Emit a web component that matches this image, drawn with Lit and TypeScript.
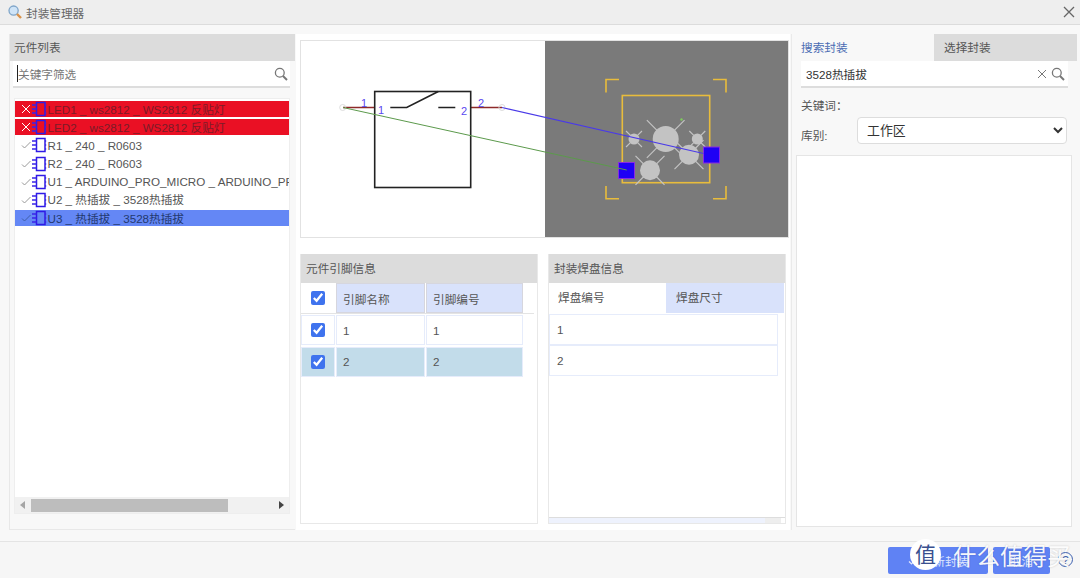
import { html, css, svg, LitElement } from 'lit';
import { customElement } from 'lit/decorators.js';
import { classMap } from 'lit/directives/class-map.js';

const PARTS = [
  { label: 'LED1 _ ws2812 _ WS2812 反贴灯', state: 'error' },
  { label: 'LED2 _ ws2812 _ WS2812 反贴灯', state: 'error' },
  { label: 'R1 _ 240 _ R0603', state: 'ok' },
  { label: 'R2 _ 240 _ R0603', state: 'ok' },
  { label: 'U1 _ ARDUINO_PRO_MICRO _ ARDUINO_PRO_MICRO', state: 'ok' },
  { label: 'U2 _ 热插拔 _ 3528热插拔', state: 'ok' },
  { label: 'U3 _ 热插拔 _ 3528热插拔', state: 'selected' },
];

// pad drill holes of the footprint, in page coordinates
const HOLES = [
  { x: 665.7, y: 139, r: 13 },
  { x: 689, y: 154.7, r: 10 },
  { x: 650, y: 170.3, r: 10 },
  { x: 634, y: 139, r: 5.5 },
  { x: 697.3, y: 139, r: 5.5 },
];

const searchIcon = html`<svg class="search-icon" viewBox="0 0 14 14" width="14" height="14">
  <circle cx="5.8" cy="5.8" r="4.4" fill="none" stroke="#777" stroke-width="1.3"></circle>
  <path d="M9 9l4 4" stroke="#777" stroke-width="2"></path>
</svg>`;

const chipIcon = html`<svg class="chip" viewBox="0 0 15 16" width="15" height="16">
  <rect x="4.5" y="1.5" width="8.5" height="13" fill="none" stroke="#2f1ae6" stroke-width="1.5"></rect>
  <path d="M0 4h4.5M0 8h4.5M0 12h4.5M13 4h1.2M13 8h1.2M13 12h1.2" stroke="#3a25e8" stroke-width="1.3"></path>
</svg>`;

@customElement('app-root')
export class AppRoot extends LitElement {
  static styles = css`
    :host {
      display: block;
      position: relative;
      width: 1080px;
      height: 578px;
      overflow: hidden;
      background: #f8f8f8;
      color: #555;
      font: 11.65px 'Liberation Sans', 'Noto Sans CJK SC', sans-serif;
    }

    .titlebar {
      display: flex;
      align-items: center;
      gap: 4px;
      height: 24px;
      padding: 0 5px 0 8px;
      box-sizing: content-box;
      background: #eee;
      border-bottom: 1px solid #dcdcdc;
    }
    .titlebar .name { flex: 1; color: #666; }

    .main {
      display: flex;
      height: 505px;
      padding-left: 9px;
    }

    .panel-head {
      height: 27px;
      line-height: 27px;
      padding-left: 4px;
      background: #dcdcdc;
      color: #555;
    }

    .left {
      width: 286px;
      margin-top: 9px;
      box-sizing: border-box;
      border: solid #e8e8e8;
      border-width: 0 0 1px 1px;
    }
    .search {
      display: flex;
      align-items: center;
      height: 27px;
      box-sizing: border-box;
      background: #fff;
      border-bottom: 2px solid #ddd;
      color: #333;
    }
    .left .search { margin: 0 5px 0 3px; padding: 0 2px 0 5px; }
    .search .text { flex: 1; }
    .search .hint { flex: 1; color: #777; border-left: 1px solid #222; margin-left: -1px; }

    .list {
      display: flex;
      flex-direction: column;
      height: 416px;
      margin: 10px 5px 0 4px;
      box-sizing: border-box;
      background: #fff;
      border: 1px solid #eee;
    }
    .rows { flex: 1; padding-top: 2px; overflow: hidden; }
    .row {
      display: flex;
      align-items: center;
      height: 16px;
      line-height: 15px;
      margin-bottom: 2.2px;
      white-space: nowrap;
      overflow-x: clip;
      color: #555;
    }
    .row.error { background: #ea1024; color: #7b1c28; }
    .row.selected { background: #6487f5; color: #23396f; }
    .mark { flex: none; width: 10px; margin: 0 1px 0 6px; }
    .chip { flex: none; margin-right: 0.5px; }

    .hscroll {
      display: flex;
      align-items: center;
      height: 16px;
      background: #f1f1f1;
    }
    .hscroll .arrow { flex: none; width: 16px; display: flex; justify-content: center; }
    .hscroll .thumb { width: 197px; height: 13px; background: #bdbdbd; }
    .hscroll .rest { flex: 1; }

    .center {
      width: 494px;
      margin: 9px 0 0 1px;
      padding: 6px 0 0 4px;
      box-sizing: border-box;
      background: #fff;
    }
    .preview {
      display: flex;
      position: relative;
      width: 489px;
      height: 198px;
      box-sizing: border-box;
      border: 1px solid #e2e2e2;
    }
    .preview .sheet { width: 244px; background: #fff; }
    .preview .board { flex: 1; background: #7a7a7a; }
    .preview svg { position: absolute; left: -1px; top: -1px; }

    .tables {
      display: flex;
      gap: 10px;
      margin-top: 16px;
    }
    .tbl {
      display: flex;
      flex-direction: column;
      width: 238px;
      height: 270px;
      box-sizing: border-box;
      background: #fff;
      border: 1px solid #e8e8e8;
      border-top: 0;
    }
    .tbl .panel-head { height: 29px; line-height: 29px; padding-left: 5px; flex: none; }

    .pin-row {
      display: grid;
      grid-template-columns: 34px 89px 97px;
      gap: 1px;
      height: 30px;
      margin-bottom: 1.5px;
    }
    .pin-row > div {
      display: flex;
      align-items: center;
      padding-left: 7px;
      box-sizing: border-box;
      outline: 1px solid #e6ecfb;
      outline-offset: -1px;
    }
    .pin-row > .check { justify-content: center; padding: 0; }
    .pin-row input { width: 14px; height: 14px; margin: 0; accent-color: #3f73ee; }
    .pin-row.head { width: 233px; border-bottom: 1px solid #e4e4e4; margin-bottom: 1px; }
    .pin-row.head > div:not(.check) { background: #d9e2fb; outline-color: #d6d6de; }
    .pin-row.head > .check { outline: 0; }
    .pin-row.on > div { background: #c2dcea; }
    .pin-row.on > .check { background: #c2dcea; }

    .tabs {
      display: grid;
      grid-template-columns: 117px 118px;
      height: 30px;
      line-height: 30px;
      flex: none;
    }
    .tabs div { padding-left: 9px; }
    .tabs .off { background: #d9e2fb; padding-left: 10px; }
    .pad-row {
      width: 229px;
      height: 31px;
      line-height: 30px;
      padding-left: 7px;
      box-sizing: border-box;
      border: 1px solid #e6ecfb;
      margin-top: 0.5px;
    }
    .pad-scroll {
      display: flex;
      align-items: stretch;
      height: 5px;
      border-top: 1px solid #ddd;
      box-sizing: content-box;
    }
    .pad-scroll .track { width: 216px; background: #eef2fd; }
    .pad-scroll .end { width: 16px; background: #eee; }
    .tbl .spacer { flex: 1; }

    .right {
      width: 286px;
      margin: 9px 0 0 1px;
      box-sizing: border-box;
      border-left: 1px solid #eaeaea;
    }
    .right-tabs {
      display: grid;
      grid-template-columns: 142px 143px;
      height: 27px;
      line-height: 27px;
    }
    .right-tabs div { padding-left: 9px; }
    .right-tabs .active { color: #4a6cb3; }
    .right-tabs .off { background: #dcdcdc; padding-left: 10px; }
    .right .search { margin: 0 9px 0 9px; padding: 0 3px 0 5px; }
    .clear { margin-right: 4px; }
    .field {
      display: flex;
      align-items: center;
      margin-left: 9px;
    }
    .field.keyword { height: 16px; margin-top: 8px; }
    .field.lib { margin-top: 5px; height: 27px; }
    .field.lib label { width: 56px; padding-top: 7px; }
    select {
      width: 210px;
      height: 27px;
      padding-left: 5px;
      background: #fff;
      border: 1px solid #ddd;
      border-radius: 4px;
      color: #333;
      font: 12.9px 'Liberation Sans', 'Noto Sans CJK SC', sans-serif;
    }
    .results {
      width: 276px;
      height: 372px;
      margin: 11px 0 0 4px;
      box-sizing: border-box;
      background: #fff;
      border: 1px solid #e5e5e5;
    }

    .footer {
      display: flex;
      justify-content: flex-end;
      gap: 5px;
      height: 37px;
      margin-top: 11px;
      padding: 5px 30px 0 0;
      box-sizing: border-box;
      border-top: 1px solid #e4e4e4;
      background: #f6f6f6;
    }
    .btn {
      display: flex;
      align-items: center;
      justify-content: center;
      gap: 4px;
      height: 27px;
      border-radius: 2px;
      background: #5f82f4;
      color: #dfe6fd;
    }
    .btn.ok { width: 100px; }
    .btn.cancel { width: 57px; }

    .help {
      position: absolute;
      left: 1058px;
      top: 552px;
      width: 13px;
      height: 13px;
      line-height: 13px;
      text-align: center;
      border: 1.5px solid #3f62b0;
      border-radius: 50%;
      color: #3f62b0;
    }
    .wm {
      position: absolute;
      left: 910px;
      top: 536px;
      display: flex;
      align-items: center;
      gap: 12px;
      pointer-events: none;
    }
    .wm .seal {
      width: 31px;
      height: 31px;
      line-height: 31px;
      border-radius: 50%;
      background: #fff;
      color: #39508f;
      font-size: 21px;
      text-align: center;
    }
    .wm .brand {
      margin-top: 2px;
      color: rgba(255, 255, 255, 0.95);
      font-size: 23.5px;
      white-space: nowrap;
      text-shadow: 0 0 2px rgba(0, 0, 0, 0.2);
    }
  `;

  renderDiagram() {
    const yellow = '#e8bc3c';
    return svg`
      <line x1="343" y1="107.5" x2="375" y2="107.5" stroke="#8e2a2a" stroke-width="1.5"></line>
      <line x1="471" y1="107.5" x2="502" y2="107.5" stroke="#8e2a2a" stroke-width="1.5"></line>
      <circle cx="342.7" cy="107.5" r="3" fill="none" stroke="#ddd"></circle>
      <circle cx="502" cy="107.5" r="3" fill="none" stroke="#ddd"></circle>
      <rect x="374.7" y="91.5" width="96" height="96" fill="none" stroke="#222" stroke-width="1.6"></rect>
      <path d="M390.3 107.5H406.7L438.3 91.5M438.3 107.5H455.3" fill="none" stroke="#222" stroke-width="1.6"></path>
      <g fill="#5a48f0" font-size="11" font-family="Liberation Sans, sans-serif">
        <text x="361" y="107">1</text>
        <text x="378" y="113.5">1</text>
        <text x="478" y="107">2</text>
        <text x="461" y="114.5">2</text>
      </g>
      <path d="M606 92.5V79.5H619M713 79.5H726V92.5M606 186V198.7H619M713 198.7H726V186" fill="none" stroke=${yellow} stroke-width="1.6"></path>
      <rect x="622.3" y="95.5" width="87.4" height="87.2" fill="none" stroke=${yellow} stroke-width="1.6"></rect>
      ${HOLES.map(h => {
        const near = h.r * 0.9;
        const far = h.r * 1.45;
        const rays = [[-1, -1], [1, -1], [-1, 1], [1, 1]]
          .map(([dx, dy]) => `M${h.x + dx * near * 0.72} ${h.y + dy * near * 0.72}L${h.x + dx * far} ${h.y + dy * far}`)
          .join('');
        return svg`<circle cx=${h.x} cy=${h.y} r=${h.r} fill="#c3c3c3"></circle>
          <path d=${rays} stroke="#c3c3c3" stroke-width="1.2"></path>`;
      })}
      <circle cx="681.5" cy="119.5" r="1.2" fill="#7ecb5c"></circle>
      <rect x="618.5" y="162.5" width="16" height="16" fill="#1f00f5" stroke="#8a2be2"></rect>
      <rect x="703.5" y="147" width="16" height="16" fill="#1f00f5" stroke="#8a2be2"></rect>
      <line x1="343" y1="107.5" x2="626.7" y2="170" stroke="#5c9a4c" stroke-width="1"></line>
      <line x1="502" y1="107.5" x2="703.5" y2="153.5" stroke="#4a3ae8" stroke-width="1.1"></line>
    `;
  }

  renderMark(state: string) {
    if (state === 'error') {
      return html`<svg class="mark" viewBox="0 0 10 10" width="10" height="10">
        <path d="M1 1l8 8M9 1l-8 8" stroke="#fff" stroke-width="1"></path>
      </svg>`;
    }
    const color = state === 'selected' ? '#3f5fa8' : '#999';
    return html`<svg class="mark" viewBox="0 0 10 10" width="10" height="10">
      <path d="M1 5.5l2.5 2.5L9.5 2" fill="none" stroke=${color} stroke-width="1"></path>
    </svg>`;
  }

  renderPinRow(name: string, num: string, on: boolean) {
    return html`<div class=${classMap({ 'pin-row': true, on })}>
      <div class="check"><input type="checkbox" checked /></div>
      <div>${name}</div>
      <div>${num}</div>
    </div>`;
  }

  render() {
    return html`
      <div class="titlebar">
        <svg viewBox="0 0 14 14" width="14" height="14">
          <circle cx="5.6" cy="5.6" r="4.6" fill="#cfe4f7" stroke="#7fa5c9" stroke-width="1.3"></circle>
          <path d="M9 9l4 4" stroke="#d9924a" stroke-width="2.4"></path>
        </svg>
        <span class="name">封装管理器</span>
        <svg viewBox="0 0 12 12" width="12" height="12">
          <path d="M1 1l10 10M11 1L1 11" stroke="#666" stroke-width="1.3"></path>
        </svg>
      </div>

      <div class="main">
        <section class="left">
          <div class="panel-head">元件列表</div>
          <div class="search">
            <span class="hint">关键字筛选</span>
            ${searchIcon}
          </div>
          <div class="list">
            <div class="rows">
              ${PARTS.map(p => html`<div class="row ${p.state}">
                ${this.renderMark(p.state)}${chipIcon}<span>${p.label}</span>
              </div>`)}
            </div>
            <div class="hscroll">
              <div class="arrow"><svg viewBox="0 0 6 8" width="6" height="8"><path d="M5 0v8L0 4z" fill="#a5a5a5"></path></svg></div>
              <div class="thumb"></div>
              <div class="rest"></div>
              <div class="arrow"><svg viewBox="0 0 6 8" width="6" height="8"><path d="M1 0v8l5-4z" fill="#444"></path></svg></div>
            </div>
          </div>
        </section>

        <section class="center">
          <div class="preview">
            <div class="sheet"></div>
            <div class="board"></div>
            <svg viewBox="300 40 489 198" width="489" height="198">${this.renderDiagram()}</svg>
          </div>
          <div class="tables">
            <div class="tbl pins">
              <div class="panel-head">元件引脚信息</div>
              <div class="pin-row head">
                <div class="check"><input type="checkbox" checked /></div>
                <div>引脚名称</div>
                <div>引脚编号</div>
              </div>
              ${this.renderPinRow('1', '1', false)}
              ${this.renderPinRow('2', '2', true)}
            </div>
            <div class="tbl pads">
              <div class="panel-head">封装焊盘信息</div>
              <div class="tabs">
                <div>焊盘编号</div>
                <div class="off">焊盘尺寸</div>
              </div>
              <div class="pad-row">1</div>
              <div class="pad-row">2</div>
              <div class="spacer"></div>
              <div class="pad-scroll"><div class="track"></div><div class="end"></div></div>
            </div>
          </div>
        </section>

        <section class="right">
          <div class="right-tabs">
            <div class="active">搜索封装</div>
            <div class="off">选择封装</div>
          </div>
          <div class="search">
            <span class="text">3528热插拔</span>
            <svg class="clear" viewBox="0 0 10 10" width="10" height="10">
              <path d="M1 1l8 8M9 1l-8 8" stroke="#777" stroke-width="1"></path>
            </svg>
            ${searchIcon}
          </div>
          <div class="field keyword"><label>关键词：</label></div>
          <div class="field lib">
            <label>库别:</label>
            <select><option>工作区</option></select>
          </div>
          <div class="results"></div>
        </section>
      </div>

      <div class="footer">
        <div class="btn ok">
          <svg viewBox="0 0 10 10" width="10" height="10"><path d="M1 5.5l2.5 2.5L9 2" fill="none" stroke="#dfe6fd" stroke-width="1.2"></path></svg>
          更新封装
        </div>
        <div class="btn cancel">取消</div>
      </div>

      <div class="help">?</div>
      <div class="wm">
        <div class="seal">值</div>
        <div class="brand">什么值得买</div>
      </div>
    `;
  }
}
